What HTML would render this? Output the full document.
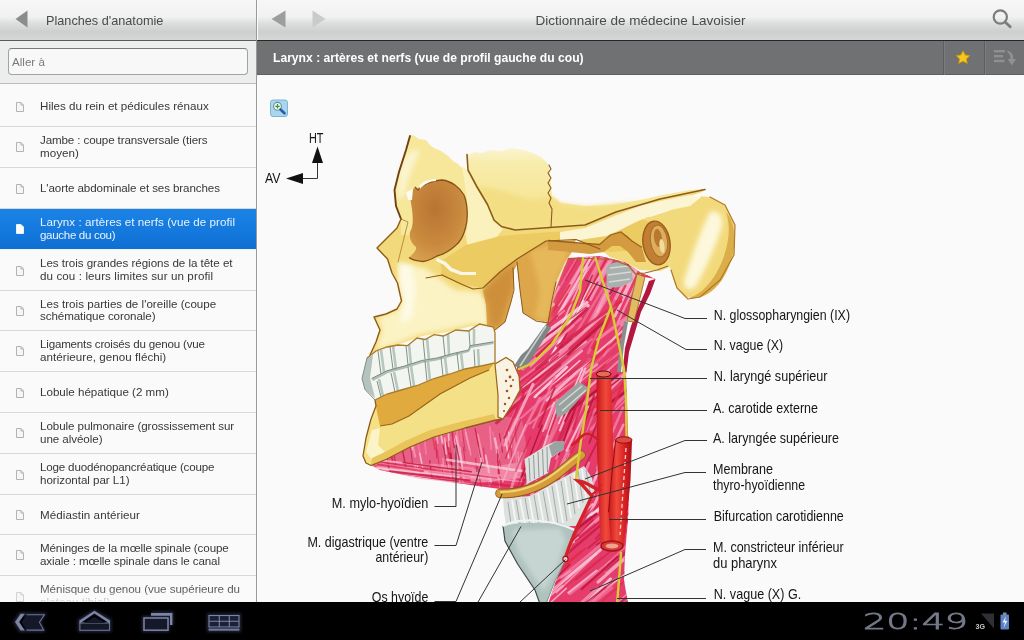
<!DOCTYPE html>
<html lang="fr">
<head>
<meta charset="utf-8">
<title>Dictionnaire de médecine Lavoisier</title>
<style>
*{box-sizing:border-box;margin:0;padding:0}
html,body{width:1024px;height:640px;overflow:hidden;background:#fafafa}
body{font-family:"Liberation Sans","DejaVu Sans",sans-serif;position:relative;color:#333;will-change:transform}
.abs{position:absolute}
#topbar{left:0;top:0;width:1024px;height:41px;background:linear-gradient(#f6f7f6 0,#f0f1f0 42%,#dddfde 58%,#cdcfce 80%,#d6d8d7 100%);border-bottom:1px solid #5a5a5a}
#left{left:0;top:41px;width:256px;height:561px;background:#fafafa;overflow:hidden}
#vdiv{left:256px;top:0;width:1px;height:602px;background:#9a9a9a}
#vdiv2{left:257px;top:0;width:1px;height:40px;background:#fbfbfb}
#ltitle{left:46px;top:12.7px;font-size:12.7px;color:#4a4a4a;white-space:nowrap;line-height:16px}
#rtitle{left:535.5px;top:13px;font-size:13.5px;color:#4a4a4a;white-space:nowrap;line-height:16px}
#searchwrap{left:0;top:0;width:256px;height:43px;background:#eceeed;border-bottom:1px solid #b9bbba}
#search{left:8px;top:7px;width:240px;height:27px;border:1px solid #a2a4a3;border-top-color:#787a79;border-radius:4px;background:#f8f8f8;font-size:11.6px;color:#7a7a7a;line-height:25px;padding-left:3px}
.row{position:absolute;left:0;width:256px;height:41px;border-bottom:1px solid #d8d8d8;font-size:11.6px;line-height:12.8px;color:#383838}
.row .t{position:absolute;left:40px;top:50%;transform:translateY(-50%);width:212px;white-space:nowrap}
.row.sel{background:linear-gradient(#1c83e6,#0e6fd4);color:#e6f2fd;border-bottom-color:#eef3f8}
.doc{position:absolute;left:16px;top:15px;width:8px;height:10px}
#fade{left:0;top:536px;width:256px;height:25px;background:linear-gradient(rgba(250,250,250,0),rgba(250,250,250,0.22) 60%,rgba(250,250,250,0.9))}
#titlebar{left:257px;top:40px;width:767px;height:35px;background:#707173;border-top:1px solid #262626;border-bottom:1px solid #5e5f60}
#ttext{left:273px;top:50.6px;font-size:12.13px;font-weight:bold;color:#fff;white-space:nowrap;line-height:15px}
#nav{left:0;top:602px;width:1024px;height:38px;background:#000}
</style>
</head>
<body>
<div id="topbar" class="abs"></div>
<div id="vdiv" class="abs"></div>
<div id="vdiv2" class="abs"></div>
<div id="ltitle" class="abs">Planches d'anatomie</div>
<div id="rtitle" class="abs">Dictionnaire de médecine Lavoisier</div>

<div id="left" class="abs">
 <div id="searchwrap" class="abs"><div id="search" class="abs">Aller à</div></div>
 <div class="row" style="top:45px;height:41px"><div class="t"><span style="letter-spacing:0.017px">Hiles du rein et pédicules rénaux</span></div></div>
 <div class="row" style="top:86px;height:41px"><div class="t"><span style="letter-spacing:-0.122px">Jambe : coupe transversale (tiers</span><br><span style="letter-spacing:0.016px">moyen)</span></div></div>
 <div class="row" style="top:127px;height:41px"><div class="t"><span style="letter-spacing:-0.101px">L'aorte abdominale et ses branches</span></div></div>
 <div class="row sel" style="top:168px;height:41px"><div class="t"><span style="letter-spacing:0.059px">Larynx : artères et nerfs (vue de profil</span><br><span style="letter-spacing:-0.341px">gauche du cou)</span></div></div>
 <div class="row" style="top:209px;height:41px"><div class="t"><span style="letter-spacing:-0.039px">Les trois grandes régions de la tête et</span><br><span style="letter-spacing:0.101px">du cou : leurs limites sur un profil</span></div></div>
 <div class="row" style="top:250px;height:40px"><div class="t"><span style="letter-spacing:0.019px">Les trois parties de l'oreille (coupe</span><br><span style="letter-spacing:-0.090px">schématique coronale)</span></div></div>
 <div class="row" style="top:290px;height:41px"><div class="t"><span style="letter-spacing:-0.193px">Ligaments croisés du genou (vue</span><br><span style="letter-spacing:0.050px">antérieure, genou fléchi)</span></div></div>
 <div class="row" style="top:331px;height:41px"><div class="t"><span style="letter-spacing:-0.007px">Lobule hépatique (2 mm)</span></div></div>
 <div class="row" style="top:372px;height:41px"><div class="t"><span style="letter-spacing:-0.066px">Lobule pulmonaire (grossissement sur</span><br><span style="letter-spacing:-0.061px">une alvéole)</span></div></div>
 <div class="row" style="top:413px;height:41px"><div class="t"><span style="letter-spacing:-0.179px">Loge duodénopancréatique (coupe</span><br><span style="letter-spacing:-0.043px">horizontal par L1)</span></div></div>
 <div class="row" style="top:454px;height:40px"><div class="t"><span style="letter-spacing:0.077px">Médiastin antérieur</span></div></div>
 <div class="row" style="top:494px;height:41px"><div class="t"><span style="letter-spacing:-0.116px">Méninges de la mœlle spinale (coupe</span><br><span style="letter-spacing:-0.105px">axiale : mœlle spinale dans le canal</span></div></div>
 <div class="row" style="top:535px;height:41px"><div class="t"><span style="letter-spacing:-0.050px">Ménisque du genou (vue supérieure du</span><br><span style="letter-spacing:0.074px">plateau tibial)</span></div></div>

 <div id="fade" class="abs"></div>
</div>

<div id="titlebar" class="abs"></div>
<div id="ttext" class="abs">Larynx : artères et nerfs (vue de profil gauche du cou)</div>

<svg class="abs" style="left:0;top:0" width="1024" height="640" viewBox="0 0 1024 640">
<defs>
 <clipPath id="content"><rect x="257" y="76" width="767" height="526"/></clipPath>
 <linearGradient id="boneG" x1="0" y1="0" x2="1" y2="1">
  <stop offset="0" stop-color="#f6e596"/><stop offset="1" stop-color="#ecc964"/>
 </linearGradient>
 <radialGradient id="orbitG" cx="0.45" cy="0.35" r="0.75">
  <stop offset="0" stop-color="#b87432"/><stop offset="0.6" stop-color="#c98a3e"/><stop offset="1" stop-color="#dba655"/>
 </radialGradient>
 <linearGradient id="artG" x1="0" y1="0" x2="1" y2="0">
  <stop offset="0" stop-color="#c8161c"/><stop offset="0.35" stop-color="#ef4a3c"/><stop offset="0.7" stop-color="#d81e22"/><stop offset="1" stop-color="#a80f16"/>
 </linearGradient>
 <linearGradient id="tempG" gradientUnits="userSpaceOnUse" x1="0" y1="146" x2="0" y2="215"><stop offset="0" stop-color="#fbf6d6"/><stop offset="0.25" stop-color="#f8ecac"/><stop offset="1" stop-color="#f5e48e"/></linearGradient>
 <filter id="soft" x="-5%" y="-5%" width="110%" height="110%"><feGaussianBlur stdDeviation="0.6"/></filter>
 <filter id="soft2" x="-10%" y="-10%" width="120%" height="120%"><feGaussianBlur stdDeviation="2.5"/></filter>
 <filter id="soft3" x="-20%" y="-20%" width="140%" height="140%"><feGaussianBlur stdDeviation="5"/></filter>
</defs>
<g clip-path="url(#content)">
<clipPath id="neckclip"><path d="M568,258 L600,256 L625,262 L640,272 L655,279 L650,292 L640,310 L634,330 L628,350 L626,375 L628,435 L631,444 L628,519 L625,554 L624,580 L628,604 L548,604 L556,581 L566,558 L572,530 L560,522 L525,512 L512,497 L500,489 L470,485 L440,480 L400,474 L380,470 L371,465 L410,440 L500,415 L517,385 L517,363 L528,352 L545,328 L549,312 L555,291 Z"/></clipPath>
<path d="M568,258 L600,256 L625,262 L640,272 L655,279 L650,292 L640,310 L634,330 L628,350 L626,375 L628,435 L631,444 L628,519 L625,554 L624,580 L628,604 L548,604 L556,581 L566,558 L572,530 L560,522 L525,512 L512,497 L500,489 L470,485 L440,480 L400,474 L380,470 L371,465 L410,440 L500,415 L517,385 L517,363 L528,352 L545,328 L549,312 L555,291 Z" fill="#e53c6c"/>
<path d="M371,465 L410,441 L500,415 L522,420 L527,450 L516,480 L460,484 L390,472 Z" fill="#ec7d9d" opacity="0.55"/>
<path d="M376,466 L420,468 L470,470 L522,462 L520,478 L470,484 L420,479 L385,471 Z" fill="#f3a0b8" opacity="0.6" filter="url(#soft)"/>
<g clip-path="url(#neckclip)" fill="none" stroke-linecap="round">
<path d="M603.3,258.8 L563.3,335.2" stroke="#f586aa" stroke-width="3.2" opacity="0.63"/>
<path d="M647.4,258.6 L617.7,322.8" stroke="#fbcadb" stroke-width="2.1" opacity="0.59"/>
<path d="M644.8,289.3 L621.9,324.7" stroke="#fbcadb" stroke-width="2.8" opacity="0.80"/>
<path d="M555.3,225.7 L528.8,286.6" stroke="#f9b0c8" stroke-width="3.3" opacity="0.79"/>
<path d="M643.6,247.9 L614.3,311.0" stroke="#f9b0c8" stroke-width="2.8" opacity="0.75"/>
<path d="M627.4,266.7 L598.1,311.9" stroke="#f693b3" stroke-width="2.9" opacity="0.68"/>
<path d="M563.2,258.0 L541.1,295.4" stroke="#fbcadb" stroke-width="1.7" opacity="0.67"/>
<path d="M545.1,222.7 L513.6,289.9" stroke="#f693b3" stroke-width="2.4" opacity="0.94"/>
<path d="M593.9,229.8 L557.3,291.2" stroke="#f27aa2" stroke-width="2.2" opacity="0.67"/>
<path d="M539.9,246.5 L504.4,325.0" stroke="#fde0ea" stroke-width="1.7" opacity="0.57"/>
<path d="M647.3,238.2 L615.9,298.5" stroke="#f9b0c8" stroke-width="3.5" opacity="0.86"/>
<path d="M594.9,258.7 L562.5,308.9" stroke="#f693b3" stroke-width="2.0" opacity="0.94"/>
<path d="M650.4,239.7 L614.6,316.0" stroke="#fbcadb" stroke-width="3.5" opacity="0.79"/>
<path d="M611.7,237.2 L589.9,279.2" stroke="#f693b3" stroke-width="3.0" opacity="0.68"/>
<path d="M572.2,241.0 L550.8,280.0" stroke="#f9b0c8" stroke-width="1.5" opacity="0.70"/>
<path d="M625.1,234.9 L589.1,294.2" stroke="#f9b0c8" stroke-width="3.2" opacity="0.62"/>
<path d="M559.0,286.6 L524.2,359.6" stroke="#f9b0c8" stroke-width="1.8" opacity="0.80"/>
<path d="M611.4,280.3 L583.7,332.8" stroke="#f693b3" stroke-width="2.3" opacity="0.59"/>
<path d="M538.4,304.7 L512.4,349.7" stroke="#f27aa2" stroke-width="2.3" opacity="0.91"/>
<path d="M612.1,257.7 L565.3,330.4" stroke="#f9b0c8" stroke-width="2.0" opacity="0.77"/>
<path d="M653.7,278.2 L625.0,323.9" stroke="#f9b0c8" stroke-width="3.0" opacity="0.58"/>
<path d="M586.8,254.6 L568.4,292.7" stroke="#f586aa" stroke-width="2.6" opacity="0.60"/>
<path d="M592.7,283.1 L548.7,360.5" stroke="#fde0ea" stroke-width="2.5" opacity="0.93"/>
<path d="M616.8,295.8 L588.3,352.8" stroke="#f27aa2" stroke-width="3.4" opacity="0.56"/>
<path d="M626.0,256.8 L592.2,325.5" stroke="#f693b3" stroke-width="1.7" opacity="0.77"/>
<path d="M642.4,289.2 L603.9,355.8" stroke="#f27aa2" stroke-width="2.2" opacity="0.82"/>
<path d="M661.7,294.2 L630.5,346.4" stroke="#fbcadb" stroke-width="2.6" opacity="0.80"/>
<path d="M587.7,266.5 L559.3,330.9" stroke="#fde0ea" stroke-width="1.7" opacity="0.65"/>
<path d="M599.9,242.2 L556.6,317.3" stroke="#fbcadb" stroke-width="2.4" opacity="0.89"/>
<path d="M541.8,293.1 L521.7,329.4" stroke="#fbcadb" stroke-width="1.5" opacity="0.93"/>
<path d="M552.9,281.2 L518.7,345.8" stroke="#f693b3" stroke-width="2.2" opacity="0.61"/>
<path d="M622.9,259.1 L588.4,328.7" stroke="#fbcadb" stroke-width="2.5" opacity="0.65"/>
<path d="M595.2,243.1 L558.2,304.5" stroke="#f9b0c8" stroke-width="3.3" opacity="0.70"/>
<path d="M612.6,258.1 L590.7,299.4" stroke="#f693b3" stroke-width="2.9" opacity="0.93"/>
<path d="M572.3,239.5 L545.2,295.8" stroke="#f9b0c8" stroke-width="3.2" opacity="0.70"/>
<path d="M612.6,273.1 L573.0,337.8" stroke="#f586aa" stroke-width="2.4" opacity="0.58"/>
<path d="M535.0,302.3 L513.9,338.7" stroke="#f586aa" stroke-width="2.2" opacity="0.81"/>
<path d="M611.7,275.7 L586.3,330.4" stroke="#f27aa2" stroke-width="2.0" opacity="0.61"/>
<path d="M541.8,275.0 L511.3,329.4" stroke="#d82a52" stroke-width="2.9" opacity="0.82"/>
<path d="M557.5,268.1 L538.3,313.1" stroke="#b81238" stroke-width="2.2" opacity="0.56"/>
<path d="M569.7,285.1 L533.7,341.7" stroke="#e02c44" stroke-width="2.3" opacity="0.85"/>
<path d="M592.4,275.4 L557.8,353.4" stroke="#b81238" stroke-width="1.4" opacity="0.73"/>
<path d="M621.7,297.4 L593.5,349.1" stroke="#e02c44" stroke-width="2.6" opacity="0.93"/>
<path d="M597.6,282.1 L572.3,325.6" stroke="#cf1f48" stroke-width="1.6" opacity="0.91"/>
<path d="M674.4,299.6 L640.1,357.0" stroke="#d82a52" stroke-width="1.7" opacity="0.84"/>
<path d="M531.5,274.1 L512.9,311.6" stroke="#b81238" stroke-width="2.6" opacity="0.74"/>
<path d="M535.1,297.2 L512.9,334.2" stroke="#c4183f" stroke-width="2.2" opacity="0.82"/>
<path d="M672.1,252.1 L624.4,328.4" stroke="#e02c44" stroke-width="2.7" opacity="0.83"/>
<path d="M670.1,252.0 L634.7,331.9" stroke="#c4183f" stroke-width="2.0" opacity="0.77"/>
<path d="M647.7,275.9 L625.0,318.4" stroke="#e02c44" stroke-width="1.7" opacity="0.82"/>
<path d="M669.1,288.6 L638.2,351.9" stroke="#c4183f" stroke-width="2.9" opacity="0.76"/>
<path d="M615.9,240.6 L584.5,299.6" stroke="#e02c44" stroke-width="1.9" opacity="0.77"/>
<path d="M544.4,295.6 L507.9,352.0" stroke="#cf1f48" stroke-width="2.1" opacity="0.83"/>
<path d="M545.6,269.8 L512.9,321.0" stroke="#b81238" stroke-width="1.7" opacity="0.74"/>
<path d="M559.2,253.3 L516.4,321.8" stroke="#b81238" stroke-width="2.1" opacity="0.59"/>
<path d="M592.0,234.3 L565.5,280.2" stroke="#cf1f48" stroke-width="1.3" opacity="0.61"/>
<path d="M538.0,241.9 L505.3,310.7" stroke="#b81238" stroke-width="1.4" opacity="0.84"/>
<path d="M548.3,269.5 L526.1,317.1" stroke="#e02c44" stroke-width="2.8" opacity="0.56"/>
<path d="M625.4,285.7 L591.8,348.0" stroke="#e02c44" stroke-width="2.3" opacity="0.76"/>
<path d="M656.9,263.4 L621.5,338.3" stroke="#d82a52" stroke-width="2.8" opacity="0.68"/>
<path d="M578.0,302.9 L550.2,345.6" stroke="#cf1f48" stroke-width="1.4" opacity="0.65"/>
<path d="M633.4,255.3 L610.1,293.6" stroke="#b81238" stroke-width="2.2" opacity="0.83"/>
<path d="M564.3,265.6 L531.9,338.6" stroke="#e02c44" stroke-width="2.4" opacity="0.91"/>
<path d="M672.2,235.6 L639.0,291.8" stroke="#e02c44" stroke-width="3.0" opacity="0.88"/>
<path d="M627.7,346.1 L595.0,371.1" stroke="#f586aa" stroke-width="2.5" opacity="0.78"/>
<path d="M552.7,319.8 L512.4,349.7" stroke="#f27aa2" stroke-width="3.4" opacity="0.59"/>
<path d="M547.5,377.0 L497.4,415.3" stroke="#f27aa2" stroke-width="2.3" opacity="0.72"/>
<path d="M580.5,318.5 L534.6,355.1" stroke="#f693b3" stroke-width="3.2" opacity="0.62"/>
<path d="M591.5,358.6 L547.5,399.7" stroke="#f9b0c8" stroke-width="1.7" opacity="0.87"/>
<path d="M586.9,302.5 L520.7,351.1" stroke="#fde0ea" stroke-width="3.4" opacity="0.78"/>
<path d="M560.6,349.5 L515.2,384.1" stroke="#f27aa2" stroke-width="3.3" opacity="0.85"/>
<path d="M632.7,367.4 L584.0,402.9" stroke="#f586aa" stroke-width="2.9" opacity="0.86"/>
<path d="M634.1,325.9 L579.6,379.0" stroke="#f27aa2" stroke-width="2.1" opacity="0.59"/>
<path d="M651.9,369.4 L591.2,429.1" stroke="#f27aa2" stroke-width="3.4" opacity="0.82"/>
<path d="M581.9,350.9 L529.2,394.6" stroke="#fbcadb" stroke-width="2.5" opacity="0.75"/>
<path d="M563.7,310.7 L517.4,348.5" stroke="#f693b3" stroke-width="2.7" opacity="0.85"/>
<path d="M561.3,337.6 L530.3,366.6" stroke="#fbcadb" stroke-width="1.5" opacity="0.65"/>
<path d="M573.4,325.4 L522.7,369.2" stroke="#f586aa" stroke-width="2.6" opacity="0.95"/>
<path d="M608.6,371.0 L574.5,398.6" stroke="#f693b3" stroke-width="2.3" opacity="0.93"/>
<path d="M593.2,371.2 L529.4,424.0" stroke="#f586aa" stroke-width="1.6" opacity="0.93"/>
<path d="M591.7,339.1 L539.2,385.2" stroke="#f27aa2" stroke-width="2.5" opacity="0.66"/>
<path d="M654.0,345.9 L599.0,400.3" stroke="#f9b0c8" stroke-width="2.7" opacity="0.80"/>
<path d="M579.9,360.5 L548.2,389.0" stroke="#fbcadb" stroke-width="1.6" opacity="0.95"/>
<path d="M660.7,298.1 L596.0,353.7" stroke="#fbcadb" stroke-width="2.0" opacity="0.85"/>
<path d="M553.1,304.3 L487.8,351.5" stroke="#f9b0c8" stroke-width="3.5" opacity="0.88"/>
<path d="M614.5,306.1 L560.3,352.3" stroke="#f9b0c8" stroke-width="3.2" opacity="0.69"/>
<path d="M551.3,333.7 L515.8,364.4" stroke="#f586aa" stroke-width="2.0" opacity="0.78"/>
<path d="M592.6,363.1 L538.1,401.3" stroke="#f27aa2" stroke-width="3.0" opacity="0.65"/>
<path d="M559.6,366.6 L497.8,416.2" stroke="#f27aa2" stroke-width="2.0" opacity="0.79"/>
<path d="M620.3,359.3 L583.7,392.6" stroke="#f9b0c8" stroke-width="1.9" opacity="0.65"/>
<path d="M662.4,363.8 L602.7,422.7" stroke="#f693b3" stroke-width="1.5" opacity="0.65"/>
<path d="M537.2,305.9 L499.3,340.2" stroke="#f693b3" stroke-width="3.3" opacity="0.61"/>
<path d="M567.2,377.3 L519.1,419.8" stroke="#f27aa2" stroke-width="2.2" opacity="0.85"/>
<path d="M634.0,312.1 L597.2,339.8" stroke="#f586aa" stroke-width="3.2" opacity="0.86"/>
<path d="M589.9,359.3 L546.7,400.3" stroke="#f9b0c8" stroke-width="2.8" opacity="0.95"/>
<path d="M585.4,341.3 L522.7,386.5" stroke="#fbcadb" stroke-width="2.8" opacity="0.78"/>
<path d="M595.9,324.0 L545.0,367.8" stroke="#f586aa" stroke-width="2.5" opacity="0.82"/>
<path d="M566.9,367.1 L534.8,396.9" stroke="#fde0ea" stroke-width="2.7" opacity="0.83"/>
<path d="M597.1,364.5 L551.6,397.8" stroke="#f9b0c8" stroke-width="2.2" opacity="0.84"/>
<path d="M588.2,305.5 L529.8,353.3" stroke="#fde0ea" stroke-width="3.3" opacity="0.73"/>
<path d="M632.5,326.0 L590.3,362.7" stroke="#e02c44" stroke-width="1.6" opacity="0.69"/>
<path d="M581.4,329.4 L536.4,368.7" stroke="#c4183f" stroke-width="2.5" opacity="0.70"/>
<path d="M587.2,308.6 L536.5,356.2" stroke="#cf1f48" stroke-width="2.6" opacity="0.90"/>
<path d="M574.1,300.8 L523.4,342.7" stroke="#e02c44" stroke-width="1.7" opacity="0.56"/>
<path d="M641.7,330.7 L590.3,376.9" stroke="#e02c44" stroke-width="1.4" opacity="0.58"/>
<path d="M620.7,378.1 L586.2,405.7" stroke="#c4183f" stroke-width="1.4" opacity="0.88"/>
<path d="M591.7,358.1 L539.5,395.9" stroke="#d82a52" stroke-width="2.6" opacity="0.71"/>
<path d="M583.7,373.8 L527.4,421.2" stroke="#e02c44" stroke-width="2.6" opacity="0.58"/>
<path d="M621.0,301.3 L557.3,346.1" stroke="#d82a52" stroke-width="2.7" opacity="0.87"/>
<path d="M649.4,363.7 L580.7,418.5" stroke="#e02c44" stroke-width="1.9" opacity="0.55"/>
<path d="M559.8,364.9 L496.6,422.9" stroke="#c4183f" stroke-width="3.0" opacity="0.70"/>
<path d="M557.8,315.8 L512.4,356.9" stroke="#cf1f48" stroke-width="2.0" opacity="0.84"/>
<path d="M586.3,307.2 L516.6,357.6" stroke="#b81238" stroke-width="1.2" opacity="0.74"/>
<path d="M629.8,328.5 L592.3,361.5" stroke="#e02c44" stroke-width="1.6" opacity="0.84"/>
<path d="M604.6,321.4 L568.1,354.5" stroke="#c4183f" stroke-width="2.8" opacity="0.92"/>
<path d="M617.4,375.3 L563.1,415.4" stroke="#b81238" stroke-width="2.8" opacity="0.92"/>
<path d="M589.6,335.5 L522.5,392.1" stroke="#c4183f" stroke-width="1.9" opacity="0.64"/>
<path d="M566.6,357.1 L495.7,410.6" stroke="#d82a52" stroke-width="2.6" opacity="0.57"/>
<path d="M659.8,366.8 L592.0,415.9" stroke="#b81238" stroke-width="2.6" opacity="0.84"/>
<path d="M605.6,316.6 L569.9,348.5" stroke="#d82a52" stroke-width="2.8" opacity="0.87"/>
<path d="M558.0,356.6 L503.5,402.1" stroke="#cf1f48" stroke-width="1.5" opacity="0.86"/>
<path d="M548.1,361.1 L482.2,410.4" stroke="#cf1f48" stroke-width="1.8" opacity="0.80"/>
<path d="M605.1,365.2 L551.6,417.2" stroke="#e02c44" stroke-width="2.2" opacity="0.75"/>
<path d="M536.8,319.7 L497.8,350.4" stroke="#b81238" stroke-width="1.6" opacity="0.77"/>
<path d="M450.3,426.1 L455.0,453.0" stroke="#f27aa2" stroke-width="1.5" opacity="0.77"/>
<path d="M518.0,456.7 L521.2,471.4" stroke="#f9b0c8" stroke-width="1.1" opacity="0.71"/>
<path d="M442.0,464.9 L445.1,492.0" stroke="#f693b3" stroke-width="2.0" opacity="0.83"/>
<path d="M444.8,438.2 L446.2,454.0" stroke="#fde0ea" stroke-width="1.2" opacity="0.80"/>
<path d="M417.3,438.9 L421.2,461.2" stroke="#f27aa2" stroke-width="1.9" opacity="0.77"/>
<path d="M388.3,431.3 L392.4,450.9" stroke="#f27aa2" stroke-width="2.1" opacity="0.78"/>
<path d="M477.9,434.6 L483.6,461.2" stroke="#f9b0c8" stroke-width="1.7" opacity="0.60"/>
<path d="M465.6,432.3 L469.4,448.9" stroke="#fbcadb" stroke-width="1.7" opacity="0.59"/>
<path d="M408.9,431.6 L411.4,447.4" stroke="#f693b3" stroke-width="1.4" opacity="0.88"/>
<path d="M507.9,430.2 L511.3,447.1" stroke="#fde0ea" stroke-width="1.5" opacity="0.68"/>
<path d="M435.5,422.6 L437.6,442.9" stroke="#f9b0c8" stroke-width="1.8" opacity="0.79"/>
<path d="M379.5,438.2 L381.7,457.6" stroke="#f693b3" stroke-width="1.7" opacity="0.63"/>
<path d="M424.5,438.3 L426.1,453.9" stroke="#f27aa2" stroke-width="1.9" opacity="0.91"/>
<path d="M453.6,438.1 L458.1,459.7" stroke="#fde0ea" stroke-width="1.2" opacity="0.92"/>
<path d="M517.9,451.6 L521.6,480.3" stroke="#f693b3" stroke-width="1.8" opacity="0.63"/>
<path d="M388.6,432.2 L391.0,455.3" stroke="#f27aa2" stroke-width="1.1" opacity="0.90"/>
<path d="M414.7,463.8 L416.9,484.9" stroke="#f9b0c8" stroke-width="2.1" opacity="0.77"/>
<path d="M457.0,449.8 L458.2,468.0" stroke="#f27aa2" stroke-width="1.7" opacity="0.60"/>
<path d="M492.5,431.9 L497.7,459.8" stroke="#f586aa" stroke-width="1.4" opacity="0.62"/>
<path d="M461.2,460.4 L464.5,481.4" stroke="#fde0ea" stroke-width="1.2" opacity="0.85"/>
<path d="M497.0,463.7 L499.7,487.4" stroke="#f693b3" stroke-width="1.2" opacity="0.71"/>
<path d="M381.5,449.5 L383.9,465.2" stroke="#f27aa2" stroke-width="1.6" opacity="0.66"/>
<path d="M456.0,436.1 L461.3,459.8" stroke="#fde0ea" stroke-width="1.9" opacity="0.71"/>
<path d="M448.0,427.2 L449.3,446.7" stroke="#fde0ea" stroke-width="1.7" opacity="0.71"/>
<path d="M417.2,464.0 L418.7,485.4" stroke="#fde0ea" stroke-width="1.5" opacity="0.72"/>
<path d="M456.9,464.3 L459.9,486.6" stroke="#fbcadb" stroke-width="1.5" opacity="0.56"/>
<path d="M505.0,434.4 L508.6,458.0" stroke="#fbcadb" stroke-width="1.7" opacity="0.85"/>
<path d="M419.7,453.1 L422.8,467.9" stroke="#fbcadb" stroke-width="1.3" opacity="0.90"/>
<path d="M515.6,447.0 L516.6,462.7" stroke="#f586aa" stroke-width="1.4" opacity="0.71"/>
<path d="M410.7,421.0 L412.3,449.6" stroke="#fde0ea" stroke-width="1.4" opacity="0.77"/>
<path d="M456.2,427.8 L459.9,451.9" stroke="#f693b3" stroke-width="2.1" opacity="0.59"/>
<path d="M489.8,426.7 L491.2,449.2" stroke="#f693b3" stroke-width="1.4" opacity="0.84"/>
<path d="M379.8,429.8 L383.0,450.7" stroke="#f586aa" stroke-width="1.5" opacity="0.69"/>
<path d="M460.6,427.0 L461.6,441.4" stroke="#f27aa2" stroke-width="1.4" opacity="0.61"/>
<path d="M485.6,455.5 L491.0,483.0" stroke="#fde0ea" stroke-width="2.1" opacity="0.63"/>
<path d="M494.9,438.4 L499.1,459.6" stroke="#fde0ea" stroke-width="2.2" opacity="0.63"/>
<path d="M464.8,427.5 L470.8,454.9" stroke="#f693b3" stroke-width="1.4" opacity="0.88"/>
<path d="M513.8,434.8 L515.3,455.5" stroke="#f27aa2" stroke-width="1.8" opacity="0.93"/>
<path d="M439.7,427.1 L442.7,444.4" stroke="#fde0ea" stroke-width="1.8" opacity="0.66"/>
<path d="M478.6,446.9 L481.9,465.3" stroke="#fde0ea" stroke-width="1.6" opacity="0.60"/>
<path d="M448.5,465.0 L454.0,492.8" stroke="#f9b0c8" stroke-width="1.3" opacity="0.81"/>
<path d="M389.4,468.8 L392.2,489.6" stroke="#f586aa" stroke-width="2.1" opacity="0.55"/>
<path d="M460.0,447.5 L462.6,468.1" stroke="#f9b0c8" stroke-width="1.3" opacity="0.85"/>
<path d="M410.7,434.2 L415.1,456.6" stroke="#f9b0c8" stroke-width="2.2" opacity="0.56"/>
<path d="M442.9,458.0 L444.2,478.1" stroke="#fbcadb" stroke-width="1.1" opacity="0.58"/>
<path d="M486.9,466.2 L489.7,485.1" stroke="#f693b3" stroke-width="1.6" opacity="0.75"/>
<path d="M497.4,453.7 L498.7,476.0" stroke="#c4183f" stroke-width="1.4" opacity="0.86"/>
<path d="M392.3,440.7 L395.5,465.1" stroke="#d82a52" stroke-width="1.6" opacity="0.87"/>
<path d="M410.4,446.8 L412.6,464.2" stroke="#b81238" stroke-width="1.1" opacity="0.63"/>
<path d="M515.1,424.0 L516.6,445.1" stroke="#d82a52" stroke-width="1.0" opacity="0.56"/>
<path d="M446.6,442.5 L450.3,463.2" stroke="#cf1f48" stroke-width="1.0" opacity="0.91"/>
<path d="M456.3,445.0 L461.2,471.2" stroke="#c4183f" stroke-width="0.9" opacity="0.72"/>
<path d="M475.6,458.5 L478.0,484.2" stroke="#e02c44" stroke-width="1.3" opacity="0.81"/>
<path d="M449.2,441.3 L451.8,459.1" stroke="#e02c44" stroke-width="1.6" opacity="0.57"/>
<path d="M435.8,440.8 L436.8,458.2" stroke="#cf1f48" stroke-width="1.0" opacity="0.85"/>
<path d="M461.6,425.6 L465.1,451.3" stroke="#cf1f48" stroke-width="0.9" opacity="0.71"/>
<path d="M451.0,425.1 L454.3,447.7" stroke="#cf1f48" stroke-width="1.8" opacity="0.82"/>
<path d="M477.7,467.1 L481.9,490.6" stroke="#cf1f48" stroke-width="1.4" opacity="0.65"/>
<path d="M441.9,467.0 L445.2,486.5" stroke="#e02c44" stroke-width="1.1" opacity="0.61"/>
<path d="M459.5,467.0 L462.7,492.5" stroke="#e02c44" stroke-width="1.7" opacity="0.62"/>
<path d="M498.7,468.3 L501.5,485.5" stroke="#cf1f48" stroke-width="1.1" opacity="0.69"/>
<path d="M402.5,450.2 L405.7,466.5" stroke="#c4183f" stroke-width="1.4" opacity="0.85"/>
<path d="M442.8,443.7 L447.4,467.3" stroke="#b81238" stroke-width="1.1" opacity="0.70"/>
<path d="M386.6,455.4 L390.1,474.9" stroke="#cf1f48" stroke-width="1.4" opacity="0.85"/>
<path d="M448.4,447.3 L453.0,471.2" stroke="#cf1f48" stroke-width="1.2" opacity="0.61"/>
<path d="M509.7,436.2 L512.3,462.3" stroke="#cf1f48" stroke-width="0.9" opacity="0.68"/>
<path d="M430.2,422.1 L435.0,449.8" stroke="#e02c44" stroke-width="1.5" opacity="0.67"/>
<path d="M463.2,447.0 L465.5,463.9" stroke="#c4183f" stroke-width="0.9" opacity="0.67"/>
<path d="M437.4,450.1 L439.1,466.2" stroke="#d82a52" stroke-width="1.2" opacity="0.73"/>
<path d="M429.7,460.7 L433.4,487.8" stroke="#b81238" stroke-width="1.3" opacity="0.70"/>
<path d="M499.4,433.6 L502.5,452.1" stroke="#c4183f" stroke-width="1.0" opacity="0.89"/>
<path d="M483.4,448.1 L484.8,462.2" stroke="#d82a52" stroke-width="1.5" opacity="0.58"/>
<path d="M497.1,449.2 L501.1,468.4" stroke="#d82a52" stroke-width="1.1" opacity="0.80"/>
<path d="M388.6,442.6 L392.9,462.4" stroke="#b81238" stroke-width="1.7" opacity="0.66"/>
<path d="M475.1,428.5 L480.6,456.8" stroke="#c4183f" stroke-width="1.2" opacity="0.83"/>
<path d="M450.7,453.4 L453.1,481.9" stroke="#b81238" stroke-width="1.4" opacity="0.83"/>
<path d="M437.0,477.1 L477.9,481.8" stroke="#f27aa2" stroke-width="2.4" opacity="0.91"/>
<path d="M377.2,467.9 L459.0,476.7" stroke="#fde0ea" stroke-width="1.6" opacity="0.65"/>
<path d="M341.3,466.3 L425.2,477.0" stroke="#f27aa2" stroke-width="2.3" opacity="0.90"/>
<path d="M441.7,468.2 L498.1,476.7" stroke="#f693b3" stroke-width="1.9" opacity="0.93"/>
<path d="M452.7,473.7 L523.3,481.9" stroke="#fbcadb" stroke-width="1.3" opacity="0.58"/>
<path d="M401.1,468.9 L488.8,478.9" stroke="#f9b0c8" stroke-width="2.1" opacity="0.66"/>
<path d="M428.9,471.8 L469.7,477.1" stroke="#f27aa2" stroke-width="1.5" opacity="0.82"/>
<path d="M379.5,460.2 L446.2,467.9" stroke="#f9b0c8" stroke-width="1.9" opacity="0.89"/>
<path d="M447.0,459.7 L527.3,471.8" stroke="#fde0ea" stroke-width="2.5" opacity="0.68"/>
<path d="M401.0,479.7 L456.1,487.3" stroke="#fde0ea" stroke-width="1.7" opacity="0.61"/>
<path d="M378.8,463.7 L435.0,471.4" stroke="#f586aa" stroke-width="1.6" opacity="0.72"/>
<path d="M399.2,474.4 L463.5,483.0" stroke="#f27aa2" stroke-width="1.6" opacity="0.62"/>
<path d="M430.4,464.8 L473.4,468.8" stroke="#f693b3" stroke-width="2.4" opacity="0.67"/>
<path d="M462.0,471.9 L535.7,478.6" stroke="#f586aa" stroke-width="2.3" opacity="0.90"/>
<path d="M355.1,464.9 L419.8,474.2" stroke="#fbcadb" stroke-width="1.5" opacity="0.80"/>
<path d="M407.2,475.4 L455.8,482.6" stroke="#f9b0c8" stroke-width="2.3" opacity="0.88"/>
<path d="M422.1,468.3 L496.8,478.2" stroke="#d82a52" stroke-width="1.8" opacity="0.60"/>
<path d="M407.1,476.1 L458.4,481.3" stroke="#cf1f48" stroke-width="1.5" opacity="0.83"/>
<path d="M464.2,481.6 L517.3,487.2" stroke="#d82a52" stroke-width="1.6" opacity="0.71"/>
<path d="M489.7,482.9 L531.7,488.7" stroke="#cf1f48" stroke-width="1.9" opacity="0.63"/>
<path d="M390.1,471.2 L469.7,480.5" stroke="#cf1f48" stroke-width="1.8" opacity="0.89"/>
<path d="M373.3,460.9 L434.6,470.0" stroke="#d82a52" stroke-width="1.2" opacity="0.84"/>
<path d="M403.0,462.5 L471.2,471.7" stroke="#c4183f" stroke-width="1.5" opacity="0.87"/>
<path d="M378.2,464.4 L423.0,471.3" stroke="#d82a52" stroke-width="1.9" opacity="0.72"/>
<path d="M374.7,480.1 L427.8,486.8" stroke="#d82a52" stroke-width="1.6" opacity="0.66"/>
<path d="M382.9,471.5 L440.8,477.7" stroke="#cf1f48" stroke-width="1.2" opacity="0.55"/>
<path d="M605.3,451.2 L594.8,479.5" stroke="#f9b0c8" stroke-width="3.2" opacity="0.63"/>
<path d="M623.3,424.7 L603.5,466.9" stroke="#fbcadb" stroke-width="2.4" opacity="0.64"/>
<path d="M588.6,462.9 L575.6,500.8" stroke="#f27aa2" stroke-width="3.0" opacity="0.95"/>
<path d="M569.9,454.6 L550.9,510.5" stroke="#f693b3" stroke-width="3.1" opacity="0.77"/>
<path d="M595.3,409.2 L583.4,437.8" stroke="#f693b3" stroke-width="2.4" opacity="0.55"/>
<path d="M537.0,481.6 L525.5,509.8" stroke="#f9b0c8" stroke-width="2.8" opacity="0.84"/>
<path d="M568.1,450.7 L541.7,508.0" stroke="#f693b3" stroke-width="3.1" opacity="0.74"/>
<path d="M623.0,407.6 L597.0,468.2" stroke="#f693b3" stroke-width="2.5" opacity="0.64"/>
<path d="M565.5,408.3 L541.6,459.3" stroke="#f27aa2" stroke-width="2.6" opacity="0.73"/>
<path d="M555.0,376.2 L533.1,427.8" stroke="#f27aa2" stroke-width="2.1" opacity="0.85"/>
<path d="M541.9,449.3 L521.0,496.8" stroke="#f9b0c8" stroke-width="2.1" opacity="0.61"/>
<path d="M557.1,399.7 L546.1,428.6" stroke="#f693b3" stroke-width="2.2" opacity="0.68"/>
<path d="M580.5,477.8 L563.8,512.2" stroke="#f27aa2" stroke-width="1.6" opacity="0.79"/>
<path d="M588.2,406.8 L566.5,450.7" stroke="#fbcadb" stroke-width="2.2" opacity="0.83"/>
<path d="M540.0,398.2 L514.5,449.3" stroke="#f27aa2" stroke-width="3.0" opacity="0.86"/>
<path d="M582.5,368.9 L558.8,423.2" stroke="#fde0ea" stroke-width="1.6" opacity="0.80"/>
<path d="M558.7,413.8 L537.5,468.4" stroke="#f586aa" stroke-width="3.1" opacity="0.60"/>
<path d="M606.1,451.1 L588.6,495.2" stroke="#fbcadb" stroke-width="2.4" opacity="0.70"/>
<path d="M585.3,368.6 L560.0,430.4" stroke="#fbcadb" stroke-width="2.3" opacity="0.79"/>
<path d="M586.0,476.1 L572.7,509.6" stroke="#f27aa2" stroke-width="2.8" opacity="0.68"/>
<path d="M607.1,478.1 L587.1,519.7" stroke="#f9b0c8" stroke-width="2.8" opacity="0.91"/>
<path d="M533.0,384.3 L504.8,445.0" stroke="#f9b0c8" stroke-width="2.9" opacity="0.87"/>
<path d="M576.0,484.7 L561.9,514.0" stroke="#fde0ea" stroke-width="2.1" opacity="0.76"/>
<path d="M554.1,402.5 L543.1,431.0" stroke="#fbcadb" stroke-width="2.0" opacity="0.81"/>
<path d="M525.7,424.8 L502.7,481.8" stroke="#f9b0c8" stroke-width="1.6" opacity="0.75"/>
<path d="M522.4,453.5 L501.5,519.2" stroke="#f9b0c8" stroke-width="2.9" opacity="0.62"/>
<path d="M557.9,460.3 L535.5,524.7" stroke="#f27aa2" stroke-width="1.7" opacity="0.62"/>
<path d="M565.6,459.6 L541.6,508.7" stroke="#f693b3" stroke-width="1.7" opacity="0.81"/>
<path d="M586.9,397.7 L556.2,458.7" stroke="#f586aa" stroke-width="2.6" opacity="0.72"/>
<path d="M515.3,411.1 L498.5,450.2" stroke="#f27aa2" stroke-width="2.6" opacity="0.63"/>
<path d="M538.3,458.5 L524.1,492.5" stroke="#f693b3" stroke-width="1.7" opacity="0.60"/>
<path d="M629.8,438.1 L615.4,480.0" stroke="#f693b3" stroke-width="2.7" opacity="0.84"/>
<path d="M557.4,405.6 L542.7,449.6" stroke="#fde0ea" stroke-width="2.0" opacity="0.70"/>
<path d="M587.1,407.5 L576.1,441.1" stroke="#f693b3" stroke-width="2.1" opacity="0.83"/>
<path d="M543.4,437.2 L525.4,474.5" stroke="#d82a52" stroke-width="2.5" opacity="0.58"/>
<path d="M594.0,395.5 L578.1,441.9" stroke="#b81238" stroke-width="2.0" opacity="0.73"/>
<path d="M520.6,419.8 L505.5,458.2" stroke="#d82a52" stroke-width="1.6" opacity="0.83"/>
<path d="M596.3,398.6 L581.7,442.7" stroke="#d82a52" stroke-width="1.7" opacity="0.66"/>
<path d="M527.2,458.5 L508.3,516.3" stroke="#cf1f48" stroke-width="1.8" opacity="0.63"/>
<path d="M609.8,382.3 L597.7,411.1" stroke="#d82a52" stroke-width="2.6" opacity="0.88"/>
<path d="M619.7,447.9 L608.6,482.4" stroke="#c4183f" stroke-width="1.9" opacity="0.68"/>
<path d="M604.4,427.9 L573.4,489.3" stroke="#b81238" stroke-width="1.8" opacity="0.64"/>
<path d="M580.0,392.2 L565.3,420.9" stroke="#b81238" stroke-width="2.3" opacity="0.92"/>
<path d="M580.4,433.8 L559.1,478.9" stroke="#e02c44" stroke-width="1.8" opacity="0.85"/>
<path d="M526.5,386.8 L504.4,438.2" stroke="#d82a52" stroke-width="2.1" opacity="0.94"/>
<path d="M571.8,465.4 L556.7,510.3" stroke="#d82a52" stroke-width="2.4" opacity="0.93"/>
<path d="M625.4,377.2 L608.6,417.9" stroke="#e02c44" stroke-width="2.6" opacity="0.86"/>
<path d="M524.8,474.8 L508.8,524.9" stroke="#c4183f" stroke-width="1.4" opacity="0.59"/>
<path d="M579.2,397.1 L558.8,454.7" stroke="#b81238" stroke-width="1.9" opacity="0.95"/>
<path d="M584.0,396.7 L573.2,429.1" stroke="#cf1f48" stroke-width="2.3" opacity="0.75"/>
<path d="M530.3,437.3 L515.7,471.2" stroke="#cf1f48" stroke-width="1.8" opacity="0.55"/>
<path d="M536.4,453.8 L512.1,508.0" stroke="#c4183f" stroke-width="1.6" opacity="0.80"/>
<path d="M568.3,416.1 L542.9,477.5" stroke="#cf1f48" stroke-width="1.7" opacity="0.67"/>
<path d="M542.0,425.1 L521.7,477.6" stroke="#b81238" stroke-width="1.5" opacity="0.95"/>
<path d="M590.3,378.4 L559.7,440.5" stroke="#cf1f48" stroke-width="1.8" opacity="0.67"/>
<path d="M605.5,401.3 L589.3,443.0" stroke="#b81238" stroke-width="1.7" opacity="0.81"/>
<path d="M554.8,387.6 L538.7,426.9" stroke="#c4183f" stroke-width="1.9" opacity="0.77"/>
<path d="M561.0,402.5 L549.0,434.3" stroke="#d82a52" stroke-width="1.7" opacity="0.93"/>
<path d="M565.5,575.4 L610.1,536.3" stroke="#f586aa" stroke-width="3.1" opacity="0.55"/>
<path d="M577.3,615.9 L611.9,587.8" stroke="#f27aa2" stroke-width="2.9" opacity="0.63"/>
<path d="M596.7,518.9 L623.6,493.0" stroke="#f27aa2" stroke-width="1.6" opacity="0.59"/>
<path d="M539.8,548.8 L586.6,508.5" stroke="#f27aa2" stroke-width="2.2" opacity="0.66"/>
<path d="M574.7,529.8 L630.4,488.3" stroke="#f27aa2" stroke-width="1.6" opacity="0.61"/>
<path d="M537.4,542.1 L571.3,518.4" stroke="#fbcadb" stroke-width="1.6" opacity="0.80"/>
<path d="M571.1,617.9 L610.5,578.7" stroke="#fde0ea" stroke-width="2.8" opacity="0.78"/>
<path d="M522.2,592.6 L558.9,563.7" stroke="#f693b3" stroke-width="1.8" opacity="0.58"/>
<path d="M579.4,533.5 L626.7,496.2" stroke="#f693b3" stroke-width="2.3" opacity="0.91"/>
<path d="M581.4,611.1 L632.5,566.0" stroke="#f586aa" stroke-width="2.7" opacity="0.83"/>
<path d="M556.3,592.7 L596.8,553.8" stroke="#f9b0c8" stroke-width="1.7" opacity="0.68"/>
<path d="M539.5,612.6 L566.3,588.3" stroke="#fbcadb" stroke-width="1.6" opacity="0.72"/>
<path d="M549.0,593.1 L600.4,549.9" stroke="#fde0ea" stroke-width="2.9" opacity="0.75"/>
<path d="M558.8,577.7 L609.9,538.8" stroke="#f27aa2" stroke-width="1.8" opacity="0.69"/>
<path d="M534.5,554.2 L575.7,519.9" stroke="#fbcadb" stroke-width="2.3" opacity="0.79"/>
<path d="M568.4,592.8 L596.7,570.7" stroke="#fbcadb" stroke-width="2.1" opacity="0.83"/>
<path d="M538.6,546.4 L584.4,509.0" stroke="#f27aa2" stroke-width="3.1" opacity="0.87"/>
<path d="M547.8,537.1 L579.0,514.5" stroke="#f693b3" stroke-width="2.5" opacity="0.94"/>
<path d="M605.5,565.1 L641.9,531.5" stroke="#f586aa" stroke-width="1.7" opacity="0.67"/>
<path d="M595.6,522.1 L640.4,485.4" stroke="#f586aa" stroke-width="2.3" opacity="0.75"/>
<path d="M564.6,617.7 L597.6,588.1" stroke="#f9b0c8" stroke-width="2.8" opacity="0.64"/>
<path d="M538.7,575.5 L578.0,537.9" stroke="#f9b0c8" stroke-width="2.5" opacity="0.91"/>
<path d="M606.9,586.0 L643.1,560.1" stroke="#fde0ea" stroke-width="2.9" opacity="0.79"/>
<path d="M603.5,615.5 L629.3,592.7" stroke="#f9b0c8" stroke-width="2.4" opacity="0.65"/>
<path d="M553.5,538.2 L580.4,515.4" stroke="#f27aa2" stroke-width="1.5" opacity="0.87"/>
<path d="M608.5,529.8 L645.1,502.5" stroke="#f586aa" stroke-width="3.0" opacity="0.79"/>
<path d="M569.9,593.8 L610.2,561.8" stroke="#f586aa" stroke-width="2.8" opacity="0.65"/>
<path d="M527.3,612.7 L562.7,585.9" stroke="#f9b0c8" stroke-width="2.3" opacity="0.82"/>
<path d="M551.2,541.6 L592.4,504.2" stroke="#fde0ea" stroke-width="2.1" opacity="0.64"/>
<path d="M600.9,532.7 L653.9,490.7" stroke="#f693b3" stroke-width="2.0" opacity="0.55"/>
<path d="M611.7,614.4 L640.1,589.4" stroke="#f27aa2" stroke-width="3.0" opacity="0.57"/>
<path d="M589.2,517.1 L613.4,497.3" stroke="#fde0ea" stroke-width="3.2" opacity="0.94"/>
<path d="M606.0,572.2 L643.3,542.8" stroke="#f693b3" stroke-width="2.4" opacity="0.69"/>
<path d="M563.9,540.0 L607.9,501.9" stroke="#fbcadb" stroke-width="1.8" opacity="0.83"/>
<path d="M519.0,622.6 L566.4,576.7" stroke="#f27aa2" stroke-width="1.9" opacity="0.64"/>
<path d="M544.3,531.3 L585.9,500.7" stroke="#f9b0c8" stroke-width="3.0" opacity="0.92"/>
<path d="M520.8,568.5 L562.9,535.3" stroke="#f586aa" stroke-width="3.0" opacity="0.68"/>
<path d="M540.9,592.2 L570.3,570.9" stroke="#f693b3" stroke-width="1.7" opacity="0.90"/>
<path d="M615.5,511.9 L640.6,493.2" stroke="#fde0ea" stroke-width="2.5" opacity="0.89"/>
<path d="M598.0,582.1 L623.1,560.1" stroke="#f9b0c8" stroke-width="3.2" opacity="0.88"/>
<path d="M562.0,551.0 L593.1,520.1" stroke="#c4183f" stroke-width="1.6" opacity="0.78"/>
<path d="M566.7,554.0 L610.1,517.1" stroke="#c4183f" stroke-width="2.5" opacity="0.72"/>
<path d="M540.8,538.7 L576.1,506.1" stroke="#d82a52" stroke-width="1.5" opacity="0.82"/>
<path d="M575.6,579.9 L616.6,546.4" stroke="#cf1f48" stroke-width="1.5" opacity="0.64"/>
<path d="M544.6,553.2 L590.9,516.7" stroke="#c4183f" stroke-width="2.0" opacity="0.58"/>
<path d="M595.6,538.6 L624.9,513.2" stroke="#c4183f" stroke-width="1.7" opacity="0.69"/>
<path d="M607.4,620.7 L640.3,589.3" stroke="#c4183f" stroke-width="1.7" opacity="0.87"/>
<path d="M553.6,546.8 L596.2,514.0" stroke="#b81238" stroke-width="2.6" opacity="0.91"/>
<path d="M519.0,525.7 L570.6,481.2" stroke="#c4183f" stroke-width="1.4" opacity="0.63"/>
<path d="M595.6,624.1 L645.9,579.5" stroke="#c4183f" stroke-width="1.4" opacity="0.84"/>
<path d="M613.1,531.4 L640.9,509.5" stroke="#b81238" stroke-width="1.7" opacity="0.84"/>
<path d="M598.5,534.2 L651.5,496.9" stroke="#d82a52" stroke-width="2.1" opacity="0.60"/>
<path d="M553.8,574.8 L585.3,548.6" stroke="#e02c44" stroke-width="1.8" opacity="0.87"/>
<path d="M544.2,529.6 L584.0,490.0" stroke="#d82a52" stroke-width="2.6" opacity="0.92"/>
<path d="M575.5,541.1 L629.1,498.3" stroke="#cf1f48" stroke-width="1.6" opacity="0.87"/>
<path d="M607.7,564.8 L651.2,532.6" stroke="#b81238" stroke-width="1.3" opacity="0.61"/>
<path d="M564.7,586.9 L601.6,556.9" stroke="#e02c44" stroke-width="1.3" opacity="0.62"/>
<path d="M542.3,591.6 L569.6,564.5" stroke="#c4183f" stroke-width="1.8" opacity="0.93"/>
<path d="M584.7,517.0 L607.9,496.4" stroke="#c4183f" stroke-width="1.6" opacity="0.57"/>
<path d="M546.9,580.1 L581.1,551.1" stroke="#e02c44" stroke-width="2.2" opacity="0.62"/>
<path d="M532.6,579.2 L573.9,543.6" stroke="#e02c44" stroke-width="1.8" opacity="0.68"/>
<path d="M596.9,544.8 L651.2,504.7" stroke="#c4183f" stroke-width="1.9" opacity="0.77"/>
<path d="M599.5,603.6 L649.7,558.6" stroke="#e02c44" stroke-width="2.0" opacity="0.61"/>
<path d="M613.8,540.6 L640.5,519.7" stroke="#d82a52" stroke-width="1.9" opacity="0.59"/>
<path d="M586.5,602.2 L630.6,567.6" stroke="#b81238" stroke-width="1.8" opacity="0.75"/>
<path d="M605.9,571.0 L629.9,549.5" stroke="#b81238" stroke-width="1.3" opacity="0.61"/>
<path d="M530.6,567.8 L554.4,546.3" stroke="#cf1f48" stroke-width="1.5" opacity="0.88"/>
<path d="M588.1,548.2 L638.7,505.8" stroke="#b81238" stroke-width="1.7" opacity="0.57"/>
<path d="M533.2,603.1 L560.1,579.1" stroke="#e02c44" stroke-width="1.9" opacity="0.92"/>
<path d="M581.7,589.1 L617.3,557.1" stroke="#c4183f" stroke-width="2.2" opacity="0.87"/>
</g>
<path d="M640,276 L655,279 L650,292 L640,310 L634,330 L628,350 L626,372 L618,372 L622,345 L627,320 L634,298 Z" fill="#fafafa"/>
<path d="M649,281 L655.500,279 L650,294 L641,312 L635,332 L629,352 L626.500,372 L622.500,372 L625,348 L631,326 L638,308 L645,292 Z" fill="#b3163f"/>
<path d="M628,322 L624,345 L621,372 L617,372 L620,345 L624,321 Z" fill="#8a8f8d"/>
<path d="M637,274 L645,277 L640,298 L634,322 L627,321 L632,296 Z" fill="#e3b962" stroke="#9a6418" stroke-width="0.8"/>
<path d="M606,268 C612,260 624,260 631,268 L633,280 C626,286 614,290 607,286 Z" fill="#a9b0ae"/>
<path d="M610,268 L628,266 M608,275 L631,272 M609,282 L630,279" stroke="#d5dad8" stroke-width="1.5" fill="none"/>
<path d="M543,321 L551,328 L525,369 L514,366 Z" fill="#7d8683"/>
<path d="M546,326 L520,366" stroke="#c9cfcd" stroke-width="1.6" fill="none"/>
<path d="M555,403 L579,382 L589,388 L567,413 L557,418 Z" fill="#9aa2a0"/>
<path d="M559,405 L582,386 M562,411 L586,390" stroke="#d5dad8" stroke-width="1.4" fill="none"/>
<path d="M524.500,459 L547,445 L556,441 L564,441 L564,449 L551,458 L548,473 L527,484 Z" fill="#dde1df"/>
<path d="M529,458 L530,481 M533.500,455 L534.500,479 M538,452 L539,477 M542.500,449 L543.500,475 M547,447 L547.500,472" stroke="#8f9896" stroke-width="1" fill="none"/>
<path d="M549,446 L556,441 L564,441 L564,449 L552,457 Z" fill="#9aa3a1"/>
<!-- thyrohyoid membrane -->
<path d="M503,498 L530,496 L584,466 L592,478 L595,494 L588,508 L576,526 L560,526 L506,526 L504,512 Z" fill="#dde1de"/>
<g stroke="#f6f8f7" stroke-width="1.600" fill="none"><path d="M512,500 L516,524 M520,499 L525,524 M529,497 L534,524 M538,493 L544,524 M547,488 L554,524 M556,483 L563,523 M565,478 L571,518 M574,473 L579,508 M582,469 L586,498"/></g>
<g stroke="#9aa4a1" stroke-width="0.900" fill="none"><path d="M508,502 L511,524 M516,500 L520,524 M525,498 L529.500,524 M534,495 L539,524 M543,491 L549,524 M552,486 L558,524 M561,481 L567,521 M570,476 L575,514 M578,471 L583,503 M586,470 L590,492"/></g>
<!-- thyroid cartilage -->
<path d="M503,526 L520,523 L560,523 L575,529 L572,545 L566.500,558 L555,581 L546,604 L540,604 L535,590 L517.600,564 L505,541 Z" fill="#afc2be"/>
<path d="M512,530 L560,528 L566,540 L556,570 L544,592 L534,578 L518,552 Z" fill="#c6d5d1" filter="url(#soft2)"/>
<path d="M503,526 L505,541 L517.600,564 L535,590 L540,604" fill="none" stroke="#3f4a48" stroke-width="1.200"/>
<path d="M575,529 L566.500,558 L555,581 L546,604" fill="none" stroke="#6d7a77" stroke-width="0.800"/>
<path d="M503,526 C518,518 548,518 575,530" fill="none" stroke="#eef3f1" stroke-width="2.200"/>
<!-- hyoid -->
<path d="M500,493.500 C520,494 540,487 556,475 C566,467 574,460 581,455" fill="none" stroke="#8e5a1a" stroke-width="9.600" stroke-linecap="round"/>
<path d="M500,493.500 C520,494 540,487 556,475 C566,467 574,460 581,455" fill="none" stroke="#d69c38" stroke-width="7.800" stroke-linecap="round"/>
<path d="M501,492 C520,492 539,485 555,473 C565,465.500 573,458.500 580,453.500" fill="none" stroke="#f2d27e" stroke-width="2" stroke-linecap="round"/>
<!-- ===== SKULL ===== -->
<!-- pale washes with soft ragged edges -->
<g filter="url(#soft)">
<path d="M410,136 L413,135 L419,139 L426,140 L430,145 L434,148 L441,151 L448,156 L453,161 L458,164 L462,168 L466,176 L470,190 L470,235 L400,235 L401,219 L396,206 L394.5,190 L399,172 L406,150 Z" fill="#f6e79a"/>
<path d="M467,156 L474,152 L482,153 L490,150 L502,151 L512,148 L524,150 L533,153 L541,157 L549,165 L552,196 L561,203 L585,206 L612,205 L640,200 L662,195 L690,190 L705,189 L690,205 L640,232 L560,240 L500,232 L480,200 L468,172 Z" fill="url(#tempG)"/>
</g>
<!-- temporal squama lower (more saturated) -->
<path d="M476,186 L487,204 L494,220 L503,227 L515,230 L550,227 L585,225 L616,212 L650,202 L616,204 L585,207 L561,204 L552,197 L530,200 L500,190 Z" fill="#f3de84" filter="url(#soft2)"/>
<!-- main face + maxilla -->
<path d="M401,219 L397,228 L377,248 L387.5,259 L392,273 L397.5,283 L401.5,301 L397,309 L386,314 L374,317 L380,330 L376,342 L370,355 L397,345 L422,336 L447,332 L472,326 L495,330 L505,321 L511,300 L514,285 L513,268 L530,250 L546,241 L576,239 L600,249 L610,257 L625,262 L640,270 L660,271 L670,267 L675,285 L685,297 L700,297 L720,280 L734,255 L735,225 L725,205 L710,197 L698,196 L705,189 L662,198 L616,213 L585,226 L550,228 L515,231 L501,227 L494,220 L487,204 L476,186 L470,176 L466,172 L466,235 L401,235 Z" fill="#f2da7c"/>
<path d="M462,166 L468,171 L476.5,188 L487.5,206 L494,222 L503,229 L496,238 L478,246 L468,250 L466,235 L468,212 L466,192 Z" fill="#faf1bc" filter="url(#soft)"/>
<!-- paler maxilla body -->
<path d="M398,262 L425,268 L455,290 L480,292 L488,300 L490,326 L472,324 L447,330 L422,334 L397,343 L376,350 L382,330 L378,318 L398,310 L403,300 L399,283 Z" fill="#fbf3c4" filter="url(#soft2)"/>
<path d="M399,264 L412,266 L416,290 L412,318 L400,324 L404,302 L400,284 Z" fill="#fdfae6" filter="url(#soft2)"/>
<path d="M398,170 L404,158 L412,150 L420,150 L414,165 L408,180 L404,196 L398,200 Z" fill="#fbf4cc" filter="url(#soft2)"/>
<!-- zygomatic process / arch more saturated -->
<path d="M466,245 L500,236 L550,232 L590,230 L630,215 L650,222 L642,250 L610,252 L576,239 L546,241 L517,259 L482,288 L461,284 L442,275 L440,262 L458,250 Z" fill="#eccb62" filter="url(#soft)"/>
<!-- mastoid highlight -->
<path d="M710,212 C718,210 724,216 722,226 C716,246 706,268 696,286 C690,292 683,290 684,280 C690,262 698,236 710,212 Z" fill="#fdf8dc" filter="url(#soft2)"/>
<path d="M640,212 L662,204.500 L690,196 L705,191 L700,198 L686,204 L668,211 L650,217 Z" fill="#fcfaf0"/>
<path d="M726,212 C738,225 738,255 722,280 C712,294 700,300 688,298 C700,296 716,280 724,256 C730,238 730,224 726,212 Z" fill="#dcae4a" filter="url(#soft)"/>
<!-- infratemporal darker -->
<path d="M483,290 L500,272 L517,259 L546,241 L576,239 L572,252 L565,262 L556,282 L551,305 L548,322 L535,320 L522,313 L519,290 L517,268 L514,272 L514,290 L511,302 L505,322 L495,330 L487,326 L486,305 Z" fill="#dda64a"/>
<path d="M483,292 L500,274 L514,264 L512,290 L500,326 L490,326 L488,305 Z" fill="#c98836" filter="url(#soft2)" opacity="0.75"/>
<path d="M530,250 L570,242 L565,262 L556,282 L548,322 L535,318 L540,290 Z" fill="#e6b85a" filter="url(#soft2)"/>
<!-- white gap behind maxilla -->
<path d="M514,270 L517,265 L520,290 L523,313 L536,321 L547,323 L543,328 L528,349 L514,361 L505,340 L497,331 L506,321 L511,302 L514,288 Z" fill="#fafafa"/>
<!-- orbit -->
<path d="M415,187 L418,190 C422,184 432,181 442,180 C452,181 460,188 464,195 C468,205 468,220 465.5,228 C463,238 459,243 455,246 C448,252 442,255 437,256 C432,259 427,261 423,261.5 C417,261 412,260 409,257.5 C413,254 417,250 416,247 C411,243 409,238 410,232 C414,226 413,214 411,203 C410,196 411,191 415,187 Z" fill="url(#orbitG)"/>
<path d="M415,187 L418,190 C422,184 432,181 442,180 C452,181 460,188 464,195 C468,205 468,220 465.5,228 C463,238 459,243 455,246 C448,252 442,255 437,256 C432,259 427,261 423,261.5 C417,261 412,260 409,257.5" fill="none" stroke="#8a5218" stroke-width="1.3"/>
<!-- orbit highlights -->
<path d="M419,186 C423,181 430,179 436,179 L436,181 C430,181 424,184 420,189 Z M406,192 L413,189 L412,200 L408,200 Z" fill="#fdfbf0"/>
<path d="M437,258 L446,262 L452,268 L462,272 L476,272 L476,275 L461,275 L450,271 L444,265 L436,261 Z" fill="#fbf6e6"/>
<!-- zygomatic root / articular tubercle shading -->
<path d="M560,232 L585,228 L612,217 L640,206 L665,200 L690,195 L700,198 L690,206 L660,212 L636,222 L620,230 L606,236 L580,240 L560,241 Z" fill="#fbf5d4" filter="url(#soft)"/>
<path d="M548,241 L579,243.500 L599.500,245 L606,240 L610.500,235 L621,232 L628,236 L632,241 L642,248 L646,262 L636,262 L628,252 L620,246 L612,246 L604,252 L590,254 L570,252 L548,250 Z" fill="#d39a40" filter="url(#soft)"/>
<path d="M548,240.500 L579,243 L599.500,244.500 L610.500,235 L621,232 L632,241 L642,247.500" fill="none" stroke="#9a621c" stroke-width="1.300"/>
<path d="M568,258.500 L595,258.500 L613.600,260 L629,266 L635.500,274 L645,273 L657,270 L668,266" fill="none" stroke="#a06a22" stroke-width="1.200"/>
<!-- ear -->
<ellipse cx="656.500" cy="243" rx="13.500" ry="22" fill="#c07f34" stroke="#9a5e1c" stroke-width="1.400" transform="rotate(-8 656.500 243)"/>
<ellipse cx="659" cy="241" rx="8.500" ry="16" fill="#dcae5e" stroke="#a86c24" stroke-width="1" transform="rotate(-8 659 241)"/>
<ellipse cx="658" cy="238" rx="4" ry="9" fill="#b87830" transform="rotate(-8 658 238)"/><ellipse cx="662" cy="246" rx="2.500" ry="7" fill="#f1dc9c" transform="rotate(-8 662 246)"/>
<!-- outlines -->
<g fill="none" stroke="#8e5a1a" stroke-width="1.4" stroke-linejoin="round" stroke-linecap="round">
<path d="M410,136 L406,150 L399,172 L394.5,190 L396,206 L401,219" stroke="#6e4012" stroke-width="1.900"/>
<path d="M401,219 L397,228 L377,248 L387.5,259 L392,273 L397.5,283 L401.5,301 L397,309 L386,314 L374,317 L380,330 L376,342 L370,355"/>
<path d="M467,154.5 L468,170 L476.5,186 L487.5,204.5 L494,220 L501.5,226.5 L515,230 L550,227.5 L585,225 L616,212 L660,199 L705,189.5" stroke-width="1.6"/>
<path d="M549,165 l2,4 l-3,4 l3,5 l-3,5 l3,5 l-3,5 l3,5 l-2,5 l3,6 l-1,18" stroke-width="1.1"/>
<path d="M442,275 L461,284 L473,289 L483,288 L500,272 L517,259 L546,241 L576,239.5 L600,249" stroke-width="1.2"/>
<path d="M426,278 L442,275" stroke-width="1"/>
<path d="M710,197 L725,205 L735,225 L734,255 L720,280 L700,297 L688,299 L677,288 L671,270" stroke="#b07a28" stroke-width="1.2"/>
<path d="M513,268 L514,290 L511,302 L505,322 L495,330" stroke-width="1"/>
<path d="M517,262 L520,290 L523,313 L536,321 L548,323 L552,300 L556,282" stroke-width="1"/>
<path d="M401,219 L408,222 L404,238 L398,262" stroke-width="0.8" stroke="#a87a30"/>
</g>
<!-- ===== MANDIBLE ===== -->
<path d="M375,400 L376,406 L371,419 L366,438 L363,456 L366,463 L371,465.5 L387,459 L410,447 L434,437 L465,428 L496,420 L502,419 L512,404 L520,390 L518,375 L512,362 L506,358 L495,363 L481,366 L465,369 L450,374 L434,378.5 L418.5,385 L403,389.5 L387,394 Z" fill="#f4e086"/>
<!-- darker alveolar band -->
<path d="M375,400 L387,394 L403,389.5 L418.5,385 L434,378.5 L450,374 L465,369 L481,366 L494,363 L489,370 L470,378 L440,394 L409,416 L392,424 L380,426 L377,412 Z" fill="#e0aa3e"/>
<path d="M380,426 L392,424 L409,416 L440,394 L470,378 L489,370" fill="none" stroke="#9a6418" stroke-width="1.2"/>
<!-- chin highlight -->
<path d="M372,430 L380,428 L378,445 L385,452 L372,460 L366,452 Z" fill="#fbf4c8" filter="url(#soft)"/>
<!-- lower border shade -->
<path d="M371,465.5 L387,459 L410,447 L434,437 L465,428 L496,420 L494,414 L460,422 L430,430 L405,441 L385,452 L372,458 Z" fill="#e9c45a" filter="url(#soft)"/>
<!-- cut ramus -->
<path d="M495,364 L506,357.5 L513,362 L519,376 L520,390 L512,405 L503,419 L498,417 L498,395 Z" fill="#f8f3e2" stroke="#9a6418" stroke-width="1.2"/>
<g fill="#a8501e"><circle cx="507" cy="370" r="1.3"/><circle cx="510" cy="377" r="1.4"/><circle cx="506" cy="381" r="1.2"/><circle cx="511" cy="386" r="1.3"/><circle cx="507" cy="391" r="1.3"/><circle cx="509" cy="398" r="1.2"/><circle cx="505" cy="404" r="1.2"/><circle cx="504" cy="411" r="1.1"/><circle cx="513" cy="380" r="1"/></g>
<path d="M375,400 L376,406 L371,419 L366,438 L363,456 L366,463 L371,465.5 L387,459 L410,447 L434,437 L465,428 L496,420 L502,419" fill="none" stroke="#8e5a1a" stroke-width="1.3" stroke-linejoin="round"/>
<!-- ===== TEETH ===== -->
<path d="M367,358 L376,351 L387,347 L398,345 L407.5,345.7 L417,338 L425,339.5 L434,334.7 L443.5,336 L456,330 L468.5,331 L479.5,324 L493.5,327 L495,333 L495,363 L481,366 L465,369 L450,374 L434,378.5 L418.5,385 L403,389.5 L387,394 L375,400 L365,389.5 L362,378.5 Z" fill="#f3f5f1"/>
<g filter="url(#soft)">
<path d="M367,358 L373,355 L370,378 L375,398 L365,389.5 L362,378.5 Z" fill="#b4c3bc"/>
<path d="M371.6,378.5 L387,370.7 L404.5,366 L421.6,360.5 L437,358 L453,353.5 L468.5,350 L470,345.7 L493.5,341.8 L493.5,344 L471,348 L469,352 L453,356 L437,360.500 L422,363 L405,368.500 L388,373 L373,381 Z" fill="#aebdb6"/>
<path d="M381,350 L384,372 M393,346 L396,369 M409,344 L411,365 M427,338 L429,360 M448,334 L449,355 M474,329 L474,346 M379,379 L383,396 M394,372 L398,391 M411,366 L414,386 M428,362 L430,380 M445,357 L447,375 M461,353 L463,370 M478,349 L479,366" stroke="#b7c6bf" stroke-width="2.600" fill="none"/>
</g>
<g fill="none" stroke="#74847b" stroke-width="0.900">
<path d="M371.6,378.5 L387,370.7 L404.5,366 L421.6,360.5 L437,358 L453,353.5 L468.5,350 L470,345.7 L493.5,341.8"/>
<path d="M378,351 L381,374 M390,346.500 L393,369 M406,345.500 L408,365 M423,339 L425,359.500 M443,336 L445,356 M469,331 L470,346 M377,381 L381,397 M391,373 L395,392 M408,367 L411,387 M425,361 L427,381 M441,357.500 L443,376 M457,353 L459,371 M474,349.500 L475,367"/>
</g>
<path d="M367,358 L376,351 L387,347 L398,345 L407.5,345.7 L417,338 L425,339.5 L434,334.7 L443.5,336 L456,330 L468.5,331 L479.5,324 L493.5,327 L495,333" fill="none" stroke="#a87a2c" stroke-width="1.300"/>
<path d="M375,400 L387,394 L403,389.5 L418.5,385 L434,378.5 L450,374 L465,369 L481,366 L495,363 L495,333" fill="none" stroke="#a87a2c" stroke-width="1.300"/>
<path d="M367,358 L362,378.5 L365,389.5 L375,400" fill="none" stroke="#7f8f86" stroke-width="1"/>
<!-- sup. laryngeal nerve + others (yellow) -->
<g fill="none" stroke="#d6cc34" stroke-width="2.4" stroke-linecap="round" stroke-linejoin="round">
<path d="M595.500,258 L602,279 L611,307 L617.500,338 L624,369 L626,400 L626.500,436"/>
<path d="M611,307 L599,338 L591,369 L586,410 L580,447 L576,480"/>
<path d="M583,258 L580,291 L570.500,316 L552,344 L533,363 L519,369"/>
<path d="M621,553 L619,580 L617,604"/>
</g>
<!-- arteries -->
<path d="M596.5,374 L611,374 L613,440 L614,480 L620,512 L623,545 L601,547 L599,510 L597,450 Z" fill="url(#artG)"/>
<path d="M615.600,440 L632,440 L630.500,480 L627.500,512 L624,545 L611,545 L608.500,512 L611.500,478 Z" fill="url(#artG)"/>
<path d="M615.600,440 L611.500,478 L608.500,512" fill="none" stroke="#8e0c14" stroke-width="1"/>
<path d="M626,448 L620,535" stroke="#f7cfc8" stroke-width="1.300" stroke-dasharray="4 3" fill="none"/>
<ellipse cx="603.7" cy="374" rx="7.3" ry="3" fill="#e86a5a" stroke="#5a0c10" stroke-width="1"/>
<ellipse cx="623.800" cy="440" rx="8.200" ry="3.200" fill="#e04a40" stroke="#8a1014" stroke-width="1"/>
<ellipse cx="612" cy="546" rx="11" ry="5" fill="#d83a34" stroke="#a01418" stroke-width="1.4"/>
<ellipse cx="612" cy="546" rx="6.5" ry="2.6" fill="#f2a090"/>
<path d="M598,440 C592,434 586,432 582,436 C578,440 575,443 572,445" fill="none" stroke="#cf2028" stroke-width="2.600" stroke-linecap="round"/>
<!-- superior thyroid artery -->
<path d="M600,490 C592,488 588,482 578,481 C584,486 588,492 592,496 C586,510 574,530 566,556" fill="none" stroke="#d2222a" stroke-width="3.4" stroke-linecap="round"/>
<path d="M591,495 C597,492 599,488 601,484" fill="none" stroke="#d2222a" stroke-width="2.4"/>
<circle cx="565.5" cy="559" r="2.6" fill="#f6d8d0" stroke="#a01418" stroke-width="1.2"/>
<g fill="none" stroke="#333" stroke-width="1">
<path d="M707,318.5 H685 L585,280"/>
<path d="M707,349.5 H686 L617,310"/>
<path d="M707,378.5 H590"/>
<path d="M707,410.5 H600"/>
<path d="M707,440.5 H685 L585,479"/>
<path d="M706,472.5 H685 L567,504"/>
<path d="M706,519.5 H609"/>
<path d="M706,549.5 H685 L590,591"/>
<path d="M706,598.5 H617"/>
<path d="M434.5,506.5 H456 V445"/>
<path d="M434.5,545.5 H456 L482,462"/>
<path d="M434.5,601.5 H456 L502,494"/>
<path d="M477.500,603 L521,526.500"/>
<path d="M519,603 L565.500,559.500"/>
<path d="M317.5,160 V178.5 H300"/>
</g>
<path d="M317.5,146.5 L323,163 L312,163 Z" fill="#111"/>
<path d="M286,178.5 L303,173 L303,184 Z" fill="#111"/>
<g font-family="'Liberation Sans','DejaVu Sans',sans-serif" fill="#151515" font-size="14.5">
<text x="309" y="142.5" font-size="15.5" textLength="14.5" lengthAdjust="spacingAndGlyphs">HT</text>
<text x="265" y="183" font-size="15.5" textLength="15.5" lengthAdjust="spacingAndGlyphs">AV</text>
<text x="713.75" y="320.25" textLength="136.25" lengthAdjust="spacingAndGlyphs">N. glossopharyngien (IX)</text>
<text x="713.75" y="350.25" textLength="69.50" lengthAdjust="spacingAndGlyphs">N. vague (X)</text>
<text x="713.75" y="381.00" textLength="113.75" lengthAdjust="spacingAndGlyphs">N. laryngé supérieur</text>
<text x="713.00" y="412.50" textLength="105.00" lengthAdjust="spacingAndGlyphs">A. carotide externe</text>
<text x="713.00" y="443.00" textLength="126.00" lengthAdjust="spacingAndGlyphs">A. laryngée supérieure</text>
<text x="713.00" y="473.75" textLength="60.00" lengthAdjust="spacingAndGlyphs">Membrane</text>
<text x="713.00" y="490.00" textLength="92.00" lengthAdjust="spacingAndGlyphs">thyro-hyoïdienne</text>
<text x="713.75" y="521.25" textLength="130.00" lengthAdjust="spacingAndGlyphs">Bifurcation carotidienne</text>
<text x="713.00" y="552.00" textLength="130.75" lengthAdjust="spacingAndGlyphs">M. constricteur inférieur</text>
<text x="713.00" y="568.00" textLength="64.00" lengthAdjust="spacingAndGlyphs">du pharynx</text>
<text x="713.75" y="598.75" textLength="87.50" lengthAdjust="spacingAndGlyphs">N. vague (X) G.</text>
<text x="331.80" y="508.00" textLength="96.50" lengthAdjust="spacingAndGlyphs">M. mylo-hyoïdien</text>
<text x="307.40" y="547.00" textLength="120.90" lengthAdjust="spacingAndGlyphs">M. digastrique (ventre</text>
<text x="375.50" y="562.30" textLength="52.80" lengthAdjust="spacingAndGlyphs">antérieur)</text>
<text x="371.80" y="601.50" textLength="56.50" lengthAdjust="spacingAndGlyphs">Os hyoïde</text>
</g>
<!-- zoom icon -->
<rect x="270.500" y="100" width="17" height="16.500" rx="2.500" fill="#a9d6ef" stroke="#7db4d6" stroke-width="1"/>
<circle cx="277.500" cy="106.300" r="3.900" fill="#f4fbf4" stroke="#6c8a98" stroke-width="1.100"/>
<path d="M275.300,106.300 H279.700 M277.500,104.100 V108.500" stroke="#2f9a3a" stroke-width="1.300"/>
<path d="M280.500,109.500 L284.500,113.300" stroke="#2a5f9e" stroke-width="2.600" stroke-linecap="round"/>

</g>
</svg>


<div id="nav" class="abs"></div>
<svg class="abs" style="left:0;top:0" width="1024" height="640" viewBox="0 0 1024 640">
<defs>
<filter id="glow" x="-30%" y="-50%" width="160%" height="200%"><feGaussianBlur stdDeviation="1.6"/></filter>
</defs>
<!-- top bar icons -->
<path d="M15.5,19 L27.5,10.5 L27.5,27.5 Z" fill="#8b8c8c"/>
<path d="M271.5,19 L285.5,10.5 L285.5,27.5 Z" fill="#9c9d9d"/>
<path d="M325.5,19 L312.5,10.5 L312.5,27.5 Z" fill="#c9caca"/>
<circle cx="1000.3" cy="17" r="6.6" fill="none" stroke="#7b7c7c" stroke-width="2.2"/>
<path d="M1005.3,22.2 L1010.2,26.8" stroke="#7b7c7c" stroke-width="2.8" stroke-linecap="round"/>
<!-- title bar dividers -->
<path d="M943.5,41 V75 M984.5,41 V75" stroke="#5d5e60" stroke-width="1"/>
<path d="M944.5,41 V75 M985.5,41 V75" stroke="#7c7d7f" stroke-width="1"/>
<!-- star -->
<path d="M963,50.8 L965.2,55 L969.8,55.6 L966.5,58.9 L967.3,63.4 L963,61.3 L958.7,63.4 L959.5,58.9 L956.2,55.6 L960.8,55 Z" fill="#f7c619" stroke="#c9930c" stroke-width="0.8" stroke-linejoin="round"/>
<!-- list/sort icon -->
<g fill="#8f9091"><rect x="994" y="50" width="11" height="2.4"/><rect x="994" y="55" width="9" height="2.4"/><rect x="994" y="59.8" width="10.5" height="2.4"/>
<path d="M1007.5,50.5 C1012,52 1013.5,55 1013.2,59 L1016,59 L1011.8,65.5 L1007.8,59 L1010.4,59 C1010.6,56 1009.5,53.5 1007.5,52.5 Z"/></g>
<!-- doc icons in list placed here for simplicity -->
<g id="docs" fill="#f6f6f6" stroke="#b3b3b3" stroke-width="1">
<path d="M16.5,102.5 h4.500 l2.500,2.500 v6.500 h-7 Z M21,102.5 v2.500 h2.500"/>
<path d="M16.5,142.5 h4.500 l2.500,2.500 v6.500 h-7 Z M21,142.5 v2.500 h2.500"/>
<path d="M16.5,184.5 h4.500 l2.500,2.500 v6.500 h-7 Z M21,184.5 v2.500 h2.500"/>
<path d="M16.5,266.5 h4.500 l2.500,2.500 v6.500 h-7 Z M21,266.5 v2.500 h2.500"/>
<path d="M16.5,306.5 h4.500 l2.500,2.500 v6.500 h-7 Z M21,306.5 v2.500 h2.500"/>
<path d="M16.5,346.5 h4.500 l2.500,2.500 v6.500 h-7 Z M21,346.5 v2.500 h2.500"/>
<path d="M16.5,388.5 h4.500 l2.500,2.500 v6.500 h-7 Z M21,388.5 v2.500 h2.500"/>
<path d="M16.5,428.5 h4.500 l2.500,2.500 v6.500 h-7 Z M21,428.5 v2.500 h2.500"/>
<path d="M16.5,470.5 h4.500 l2.500,2.500 v6.500 h-7 Z M21,470.5 v2.500 h2.500"/>
<path d="M16.5,510.5 h4.500 l2.500,2.500 v6.500 h-7 Z M21,510.5 v2.500 h2.500"/>
<path d="M16.5,550.5 h4.500 l2.500,2.500 v6.500 h-7 Z M21,550.5 v2.500 h2.500"/>
<path d="M16.5,592.5 h4.500 l2.500,2.500 v6.500 h-7 Z M21,592.5 v2.500 h2.500" stroke="#d2d2d2"/>
</g>
<path d="M16.5,224.5 h4.500 l2.500,2.500 v6.500 h-7 Z" fill="#fff" stroke="#e8f1fb" stroke-width="1"/>
<!-- nav bar -->
<rect x="0" y="602" width="1024" height="38" fill="#000"/>
<g filter="url(#glow)" opacity="0.4" fill="none" stroke="#5a6aa0" stroke-width="3">
<path d="M20,614 L15,622 L20,630.500 H43 L39,622 L44,614.500 Z"/>
<path d="M79.500,620 L94.500,611.500 L110,620 V630.500 H79.500 Z"/>
<path d="M151,613 H172 V625 M143.500,617.500 H168 V630.500 H143.500 Z"/>
<rect x="208.500" y="615" width="31" height="15.500"/>
</g>
<!-- back -->
<path d="M26.500,614.750 H44.400 L39.400,622.250 L43.750,630.100 H26.500 L21.500,622.250 Z" fill="#141829"/>
<path d="M26.500,614.750 H44.400 L39.400,622.250 L43.750,630.100 H26.500" fill="none" stroke="#6c7493" stroke-width="1.100"/>
<path d="M15,622 L20.600,613.750 H24.800 L19.200,622 L24.800,630.600 H20.600 Z" fill="#7d85a4"/>
<!-- home -->
<rect x="79.900" y="623" width="29.600" height="7.300" fill="#141829" stroke="#6c7493" stroke-width="1.100"/>
<path d="M79.400,621.500 L94.400,611.250 L110,621.500 L110,618.200 L94.400,608.600 L79.400,618.200 Z" fill="#7d85a4" transform="translate(0,2.200)"/>
<path d="M84,623 L94.400,617 L105.500,623 Z" fill="#141829"/>
<!-- recent -->
<path d="M151,613 H172.400 V625 H170 V615.700 H151 Z" fill="#7d85a4"/>
<rect x="144" y="618" width="24" height="12.200" fill="#141829" stroke="#7d85a4" stroke-width="1.500"/>
<!-- grid -->
<rect x="209" y="615.500" width="30" height="11.500" fill="#1a2038" stroke="#7d85a4" stroke-width="1.100"/>
<path d="M219.300,615.500 V627 M229.300,615.500 V627 M209,621.300 H239" stroke="#7d85a4" stroke-width="1.100"/>
<rect x="208.600" y="628.500" width="30.800" height="2.200" fill="#727a98"/>
<!-- clock -->
<text x="863" y="629.400" font-family="'DejaVu Sans Light','DejaVu Sans','Liberation Sans',sans-serif" font-weight="200" font-size="21.800" fill="#737988" stroke="#737988" stroke-width="0.800" textLength="105" lengthAdjust="spacingAndGlyphs">20:49</text>
<text x="975.500" y="628.600" font-family="'Liberation Sans','DejaVu Sans',sans-serif" font-size="7.500" font-weight="bold" fill="#c9c9c9" textLength="9.500" lengthAdjust="spacingAndGlyphs">3G</text>
<path d="M981,613.500 H994 V628.500 Z" fill="#2e3034"/>
<rect x="1000.500" y="614.500" width="8.500" height="15" rx="1" fill="#5d82c6"/>
<rect x="1003" y="612.500" width="3.500" height="2.500" fill="#8a8d92"/>
<path d="M1006,616 L1002.500,622.500 H1005 L1003.500,628 L1007.500,620.800 H1005 Z" fill="#e8f0ff"/>
</svg>

</body>
</html>
